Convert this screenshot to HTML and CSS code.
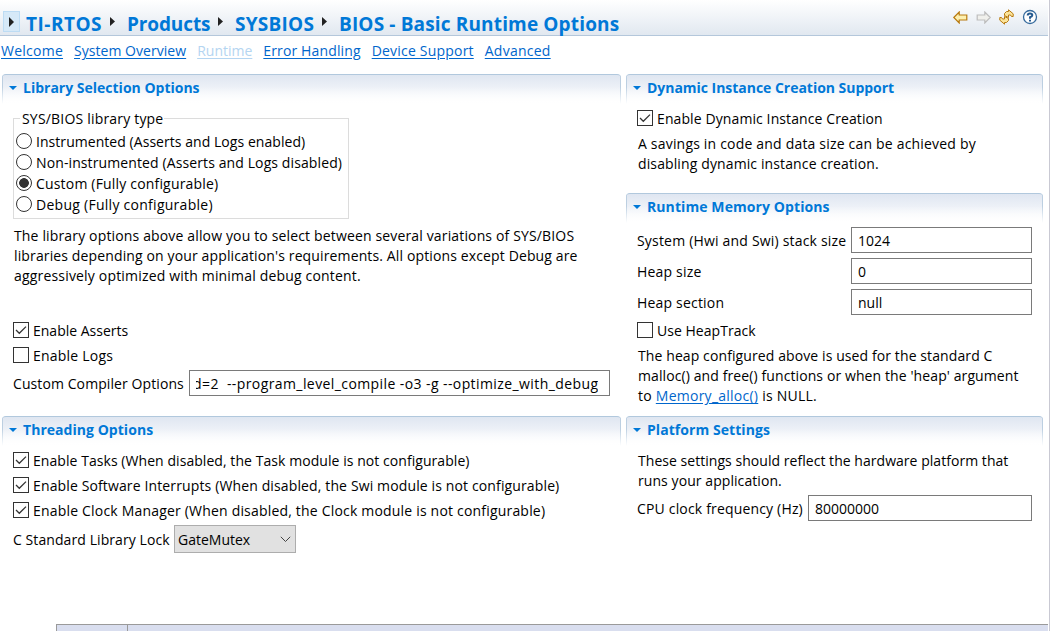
FILE: index.html
```html
<!DOCTYPE html>
<html lang="en">
<head>
<meta charset="utf-8">
<title>BIOS - Basic Runtime Options</title>
<link rel="stylesheet" href="styles.css">
</head>
<body>
<div class="page">
  <header class="bar">
    <span class="toggle"><svg width="5" height="10" viewBox="0 0 5 10"><path d="M0 0L5 5L0 10Z" fill="#222"/></svg></span>
    <h1 class="crumbs">
      <span class="c1">TI-RTOS</span><svg width="5" height="9" viewBox="0 0 5 9"><path d="M0 0L5 4.5L0 9Z" fill="#222"/></svg>
      <span class="c2">Products</span><svg width="5" height="9" viewBox="0 0 5 9"><path d="M0 0L5 4.5L0 9Z" fill="#222"/></svg>
      <span class="c3">SYSBIOS</span><svg width="5" height="9" viewBox="0 0 5 9"><path d="M0 0L5 4.5L0 9Z" fill="#222"/></svg>
      <span class="c4">BIOS - Basic Runtime Options</span>
    </h1>
    <div class="tools">
      <svg width="15" height="13" viewBox="0 0 15 13"><path d="M.8 6.5L6.2 1V4H13.8V9H6.2V12Z" fill="#fdf0b0" stroke="#b87a10" stroke-width="1.2"/></svg>
      <svg width="15" height="13" viewBox="0 0 15 13"><path d="M14.2 6.5L8.8 1V4H1.2V9H8.8V12Z" fill="#f0f0ec" stroke="#bdbdbd" stroke-width="1.2"/></svg>
      <svg width="15" height="16" viewBox="0 0 15 16"><path d="M5.500 6.500V4.500L7.500 2.500H9.500V.8L14.200 4.800V7.500H12.500L11.500 6H9.500V8.500Z" fill="#fbe49a" stroke="#b87a10"/><path d="M9.500 9.500V11.500L7.500 13.500H5.500V15.200L.8 11.200V8.500H2.500L3.500 10H5.500V7.500Z" fill="#fbe49a" stroke="#b87a10"/></svg>
      <svg width="16" height="16" viewBox="0 0 16 16"><circle cx="8" cy="8" r="6.500" fill="#fff" stroke="#34699c" stroke-width="1.300"/><path d="M5.700 6.500Q5.700 4.500 8 4.500T10.300 6.300Q10.300 7.400 8 8.300V9.700M8 10.700V12.400" fill="none" stroke="#245a90" stroke-width="2"/></svg>
    </div>
  </header>
  <nav class="links">
    <a class="n1">Welcome</a><a class="n2">System Overview</a><a class="n3 current">Runtime</a><a class="n4">Error Handling</a><a class="n5">Device Support</a><a class="n6">Advanced</a>
  </nav>
  <main class="columns">
    <div class="left">
      <section class="library">
        <h2><i class="twistie"></i><span class="h-lib">Library Selection Options</span></h2>
        <div class="group">
          <div class="legend"><span class="t-legend">SYS/BIOS library type</span></div>
          <label><i class="radio"></i><span class="r1">Instrumented (Asserts and Logs enabled)</span></label>
          <label><i class="radio"></i><span class="r2">Non-instrumented (Asserts and Logs disabled)</span></label>
          <label><i class="radio on"></i><span class="r3">Custom (Fully configurable)</span></label>
          <label><i class="radio"></i><span class="r4">Debug (Fully configurable)</span></label>
        </div>
        <p class="about"><span class="a1">The library options above allow you to select between several variations of SYS/BIOS</span><br><span class="a2">libraries depending on your application's requirements. All options except Debug are</span><br><span class="a3">aggressively optimized with minimal debug content.</span></p>
        <label class="check"><svg class="box" viewBox="0 0 14 14"><path d="M2 7L5.300 10.300L12 3.600"/></svg><span class="k1">Enable Asserts</span></label>
        <label class="check"><svg class="box" viewBox="0 0 14 14"></svg><span class="k2">Enable Logs</span></label>
        <div class="field compiler"><span class="f1">Custom Compiler Options</span><div class="input"><span class="clip"><span class="v1">d=2&nbsp; --program_level_compile -o3 -g --optimize_with_debug</span></span></div></div>
      </section>
      <section class="threading">
        <h2><i class="twistie"></i><span class="h-thr">Threading Options</span></h2>
        <label class="check"><svg class="box" viewBox="0 0 14 14"><path d="M2 7L5.300 10.300L12 3.600"/></svg><span class="k3">Enable Tasks (When disabled, the Task module is not configurable)</span></label>
        <label class="check"><svg class="box" viewBox="0 0 14 14"><path d="M2 7L5.300 10.300L12 3.600"/></svg><span class="k4">Enable Software Interrupts (When disabled, the Swi module is not configurable)</span></label>
        <label class="check"><svg class="box" viewBox="0 0 14 14"><path d="M2 7L5.300 10.300L12 3.600"/></svg><span class="k5">Enable Clock Manager (When disabled, the Clock module is not configurable)</span></label>
        <div class="field lock"><span class="f2">C Standard Library Lock</span><div class="select"><span class="v2">GateMutex</span><svg width="11" height="7" viewBox="0 0 11 7"><path d="M.8 .8L5.500 5.500L10.200 .8" fill="none" stroke="#444"/></svg></div></div>
      </section>
    </div>
    <div class="right">
      <section class="dynamic">
        <h2><i class="twistie"></i><span class="h-dyn">Dynamic Instance Creation Support</span></h2>
        <label class="check"><svg class="box" viewBox="0 0 14 14"><path d="M2 7L5.300 10.300L12 3.600"/></svg><span class="k6">Enable Dynamic Instance Creation</span></label>
        <p><span class="d1">A savings in code and data size can be achieved by</span><br><span class="d2">disabling dynamic instance creation.</span></p>
      </section>
      <section class="memory">
        <h2><i class="twistie"></i><span class="h-mem">Runtime Memory Options</span></h2>
        <div class="field"><span class="f3">System (Hwi and Swi) stack size</span><div class="input"><span class="v3">1024</span></div></div>
        <div class="field"><span class="f4">Heap size</span><div class="input"><span>0</span></div></div>
        <div class="field"><span class="f5">Heap section</span><div class="input"><span class="v5">null</span></div></div>
        <label class="check"><svg class="box" viewBox="0 0 14 14"></svg><span class="k7">Use HeapTrack</span></label>
        <p><span class="m1">The heap configured above is used for the standard C</span><br><span class="m2">malloc() and free() functions or when the 'heap' argument</span><br><span class="m3">to <a>Memory_alloc()</a> is NULL.</span></p>
      </section>
      <section class="platform">
        <h2><i class="twistie"></i><span class="h-pla">Platform Settings</span></h2>
        <p><span class="p1">These settings should reflect the hardware platform that</span><br><span class="p2">runs your application.</span></p>
        <div class="field"><span class="f6">CPU clock frequency (Hz)</span><div class="input"><span class="v6">80000000</span></div></div>
      </section>
    </div>
  </main>
  <footer class="tabs"><span class="tab"></span></footer>
</div>
</body>
</html>
```
FILE: styles.css
```css
* { box-sizing: border-box; }
body { margin: 0; background: #fff; font: 14px/20px "Open Sans", "Noto Sans", sans-serif; color: #000; white-space: nowrap; }
.page { width: 1050px; height: 631px; display: flex; flex-direction: column; overflow: hidden; border-right: 1px solid #c9c9d3; padding-right: 1px; }
h1, h2, p { margin: 0; }
svg { display: block; flex: none; }
a { color: #0066cc; text-decoration: underline; text-underline-offset: 2px; }

.bar { height: 36px; flex: none; display: flex; align-items: flex-start; background: linear-gradient(#fff, #e1e8f0); border-bottom: 1px solid #b4c7db; }
.toggle { width: 17px; height: 21px; margin: 11px 0 0 3px; border: 1px solid #bddcf4; background: #d6e9f8; display: flex; align-items: center; justify-content: center; }
.crumbs { display: flex; align-items: flex-start; padding: 11px 0 0 6px; font-size: 19px; line-height: 26px; color: #0078d7; }
.crumbs svg { margin: 6px 0 0 8px; }
.crumbs svg + span { margin-left: 12px; }
.c1 { width: 76px; letter-spacing: .5px; }
.c2 { width: 83px; letter-spacing: -.12px; }
.c3 { width: 79px; letter-spacing: .25px; }
.c4 { letter-spacing: .15px; }
.tools { margin: 9px 10px 0 auto; display: flex; align-items: center; gap: 8px; }

.links { height: 38px; flex: none; padding: 5px 0 0 1px; display: flex; gap: 11px; }
.links .current { color: #b4d5f1; }
.n1 { letter-spacing: .25px; }
.n2 { letter-spacing: .04px; }
.n4 { letter-spacing: .13px; }
.n5 { letter-spacing: .2px; }
.n6 { letter-spacing: .25px; }

.columns { display: flex; gap: 5px; padding-left: 2px; height: 550px; flex: none; }
.left { width: 619px; }
.right { width: 417px; }
section { padding-left: 11px; }
h2 { height: 30px; margin-left: -11px; padding: 0 0 4px 7px; display: flex; align-items: center; font-size: 14px; color: #0078d7; border-radius: 4px 4px 0 0; border-top: 1px solid #b1c8dd; background: linear-gradient(90deg, #bccfe1 1px, transparent 1px, transparent calc(100% - 1px), #bccfe1 calc(100% - 1px)), linear-gradient(#dfe6f1, #fff); position: relative; }
h2::after { content: ""; position: absolute; inset: 12px 0 0; background: linear-gradient(transparent, #fff); z-index: 0; }
h2 > * { position: relative; z-index: 1; }
.twistie { border: 4px solid transparent; border-top-color: #0078d7; border-bottom: 0; margin: 1px 6px 0 0; }
.h-mem { letter-spacing: .09px; }
.h-thr { letter-spacing: .04px; }
.h-pla { letter-spacing: .06px; }
.h-dyn { letter-spacing: -.03px; }

.library { height: 342px; }
.group { position: relative; width: 336px; height: 101px; margin-top: 14px; border: 1px solid #dcdcdc; padding: 12px 0 0 2px; }
.legend { position: absolute; left: 6px; top: -10px; background: #fff; padding: 0 1px 0 2px; }
.t-legend { letter-spacing: .19px; }
label { display: flex; align-items: center; padding-bottom: 1px; }
.group label { height: 21px; gap: 4px; }
.group label > span { margin-top: 2px; }
.r1 { letter-spacing: .05px; }
.r2 { letter-spacing: .11px; }
.r3 { letter-spacing: .18px; }
.r4 { letter-spacing: .27px; }
.radio { width: 16px; height: 16px; border: 1px solid #333; border-radius: 50%; flex: none; }
.radio.on { background: radial-gradient(circle, #333 4.500px, transparent 5.200px); }
.about { padding: 7px 0 0 1px; height: 99px; }
.a1 { letter-spacing: .15px; }
.a2 { letter-spacing: .13px; }
.a3 { letter-spacing: .18px; }
.check { height: 25px; gap: 4px; }
.check > span { margin-top: 1px; }
.k2 { letter-spacing: .22px; }
.k3 { letter-spacing: .06px; }
.k4 { letter-spacing: .13px; }
.k5 { letter-spacing: .19px; }
.k6 { letter-spacing: .1px; }
.k7 { letter-spacing: .03px; }
.box { width: 16px; height: 16px; border: 1px solid #333; }
.box path { fill: none; stroke: #333; stroke-width: 1.300; }
.field { display: flex; align-items: center; height: 31px; padding-bottom: 1px; }
.field > span { margin-top: 1px; }
.input { height: 26px; border: 1px solid #7a7a7a; display: flex; align-items: center; padding-left: 6px; }
.input > span { margin-top: 1px; }
.compiler { gap: 5px; }
.compiler > span { width: 171px; }
.f1 { letter-spacing: .09px; }
.compiler .input { width: 421px; }
.clip { overflow: hidden; }
.v1 { margin-left: -3px; letter-spacing: .41px; }
.threading h2 { margin-bottom: 2px; }
.lock { height: 33px; }
.lock > span { width: 161px; }
.f2 { letter-spacing: .08px; }
.select { width: 122px; height: 28px; border: 1px solid #adadad; background: #e1e1e1; display: flex; align-items: center; justify-content: space-between; padding: 0 4px 0 3px; }
.v2 { margin-top: 2px; }

.right p { padding-left: 1px; }
.dynamic { height: 119px; }
.dynamic h2 { margin-bottom: 2px; }
.dynamic p { padding-top: 3px; }
.d1 { letter-spacing: .19px; }
.d2 { letter-spacing: .12px; }
.memory { height: 223px; }
.memory h2 { margin-bottom: 2px; }
.memory .field > span { width: 214px; letter-spacing: .19px; }
.memory .input { width: 181px; }
.memory p { padding-top: 3px; }
.m1 { letter-spacing: .1px; }
.m2 { letter-spacing: .1px; }
.m3 { letter-spacing: .25px; }
.platform p { padding: 5px 0 2px; padding-left: 1px; }
.p1 { letter-spacing: .04px; }
.p2 { letter-spacing: .07px; }
.platform .field > span { width: 171px; letter-spacing: .17px; }
.platform .input { width: 224px; }

.tabs { height: 7px; flex: none; margin-left: 56px; background: #d9deef; border: 1px solid #9a9a9a; border-width: 1px 0 0 1px; }
.tab { display: block; width: 71px; height: 6px; border-right: 1px solid #9a9a9a; }
```
